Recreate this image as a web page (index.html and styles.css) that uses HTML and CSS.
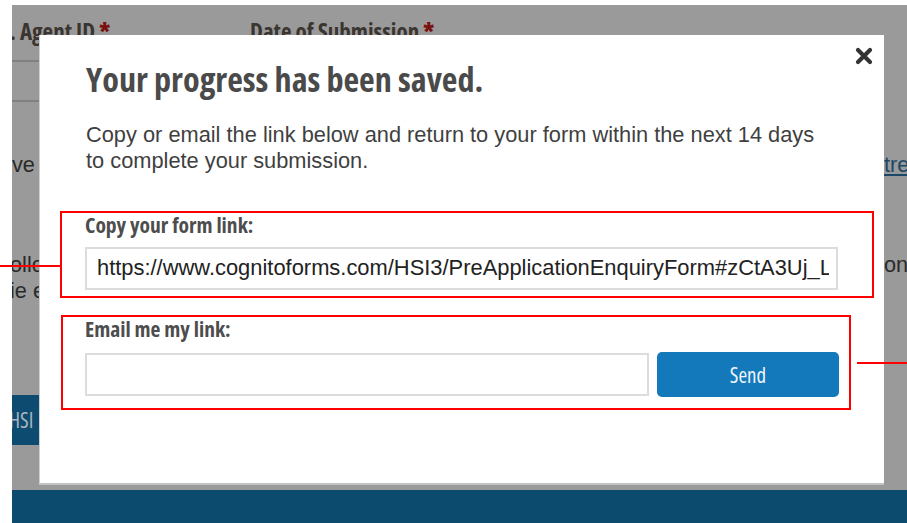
FILE: index.html
```html
<!DOCTYPE html>
<html lang="en">
<head>
<meta charset="utf-8">
<title>Save progress</title>
<link rel="stylesheet" href="styles.css">
</head>
<body>
  <div class="page">
    <div class="backdrop">
      <div class="field-row">
        <span class="field-label clip-left">. Agent ID <b class="req">*</b></span>
        <span class="field-label date-label">Date of Submission <b class="req">*</b></span>
      </div>
      <div class="field-input"></div>
      <p class="bg-text bg-ve">ve</p>
      <p class="bg-text bg-follow">ollo<br>ie e</p>
      <div class="bg-button">HSI</div>
      <a class="bg-link">tre</a>
      <p class="bg-text bg-on">on</p>
    </div>
    <div class="footer"></div>
  </div>

  <div class="modal" role="dialog">
    <button class="close" aria-label="Close">
      <svg width="20" height="18" viewBox="0 0 20 18"><path d="M4 3L16 15M16 3L4 15" stroke="#333" stroke-width="4.2" stroke-linecap="round"/></svg>
    </button>
    <h1 class="modal-title">Your progress has been saved.</h1>
    <p class="modal-text">Copy or email the link below and return to your form within the next 14 days<br>to complete your submission.</p>

    <div class="section section-copy">
      <label class="section-label">Copy your form link:</label>
      <div class="text-input link-input"><span class="link-value">https://www.cognitoforms.com/HSI3/PreApplicationEnquiryForm#zCtA3Uj_Lsk2</span></div>
    </div>

    <div class="section section-email">
      <label class="section-label">Email me my link:</label>
      <div class="email-row">
        <div class="text-input email-input"></div>
        <button class="send">Send</button>
      </div>
    </div>
  </div>

  <div class="marker marker-left"></div>
  <div class="marker marker-right"></div>
</body>
</html>
```

FILE: styles.css
```css
html, body {
  margin: 0;
  padding: 0;
}

body {
  background: #fff;
  width: 907px;
  height: 523px;
  overflow: hidden;
  position: relative;
  font-family: "Liberation Sans", Arial, sans-serif;
}

.page {
  margin: 5px 0 0 12px;
  display: flex;
  flex-direction: column;
}

/* form behind the dimmed overlay */
.backdrop {
  background: #9a9a9a;
  height: 485px;
  position: relative;
  overflow: hidden;
  color: #2e2e2e;
}

.field-row {
  display: flex;
  padding-top: 11px;
  font-family: "Open Sans", sans-serif;
  font-stretch: 75%;
  font-weight: bold;
  font-size: 23px;
  line-height: 30px;
}

.field-label {
  white-space: nowrap;
  color: #3a3530;
}

.clip-left {
  margin-left: -2px;
}

.date-label {
  margin-left: 140px;
}

.req {
  color: #7a1010;
}

.field-input {
  margin-top: 14px;
  height: 38px;
  border-top: 2px solid #808080;
  border-bottom: 2px solid #808080;
  width: 40px;
}

.bg-text {
  margin: 0;
  font-size: 21.7px;
  line-height: 26px;
  color: #2a2a2a;
  position: absolute;
}

.bg-ve { top: 147px; left: 0; }
.bg-follow { top: 247px; left: -2px; }
.bg-on { top: 247px; left: 872px; }

.bg-button {
  position: absolute;
  top: 390px;
  left: 0;
  width: 28px;
  height: 50px;
  background: #0d4b70;
  color: #a9b4bf;
  font-family: "Open Sans", sans-serif;
  font-stretch: 75%;
  font-size: 21px;
  line-height: 50px;
  text-indent: -3px;
  overflow: hidden;
}

.bg-link {
  position: absolute;
  top: 147px;
  left: 872px;
  font-size: 21.7px;
  line-height: 26px;
  color: #1d4766;
  text-decoration: underline;
}

.footer {
  height: 33px;
  background: #0c4a6e;
}

/* dialog */
.modal {
  position: absolute;
  left: 39px;
  top: 35px;
  width: 845px;
  height: 450px;
  box-sizing: border-box;
  background: #fff;
  border-left: 1px solid #d0d0d0;
  border-bottom: 2px solid #c4c4c4;
  padding: 24px 0 0 46px;
  color: #555;
}

.close {
  position: absolute;
  top: 12px;
  right: 10px;
  border: 0;
  background: none;
  padding: 0;
  width: 20px;
  height: 18px;
  cursor: pointer;
}

.close svg { display: block; }

.modal-title {
  margin: 0;
  font-family: "Open Sans", sans-serif;
  font-stretch: 75%;
  font-weight: bold;
  font-size: 34.2px;
  line-height: 40px;
  color: #4a4a4a;
}

.modal-text {
  margin: 23px 0 0;
  font-size: 21.8px;
  line-height: 26px;
  color: #3f3f3f;
}

.section {
  box-sizing: border-box;
  border: 2px solid #ff0000;
}

.section-copy {
  margin: 37px 0 0 -26px;
  padding-left: 23px;
  width: 814px;
  height: 87px;
}

.section-email {
  margin: 17px 0 0 -25px;
  padding-left: 22px;
  width: 790px;
  height: 95px;
}

.section-label {
  display: block;
  font-family: "Open Sans", sans-serif;
  font-stretch: 75%;
  font-weight: bold;
  font-size: 21.5px;
  line-height: 24px;
  color: #4d4d4d;
}

.text-input {
  box-sizing: border-box;
  border: 2px solid #dcdcdc;
  background: #fff;
  height: 43px;
}

.link-input {
  margin-top: 10px;
  width: 753px;
  padding: 0 7px 0 10px;
  font-size: 21.9px;
  line-height: 38px;
  color: #222;
}

.link-value {
  display: block;
  white-space: nowrap;
  overflow: hidden;
}

.email-row {
  display: flex;
  align-items: center;
  gap: 8px;
  margin-top: 11px;
}

.email-input {
  width: 564px;
}

.send {
  width: 182px;
  height: 45px;
  border: 0;
  border-radius: 5px;
  background: #1479ba;
  color: #eef5fb;
  font-family: "Open Sans", sans-serif;
  font-stretch: 75%;
  font-weight: 500;
  font-size: 21px;
  padding: 0;
}

/* red callout connectors */
.marker {
  position: absolute;
  height: 2px;
  background: #ff0000;
}

.marker-left { left: 0; top: 265px; width: 61px; }
.marker-right { left: 857px; top: 362px; width: 50px; }
```
